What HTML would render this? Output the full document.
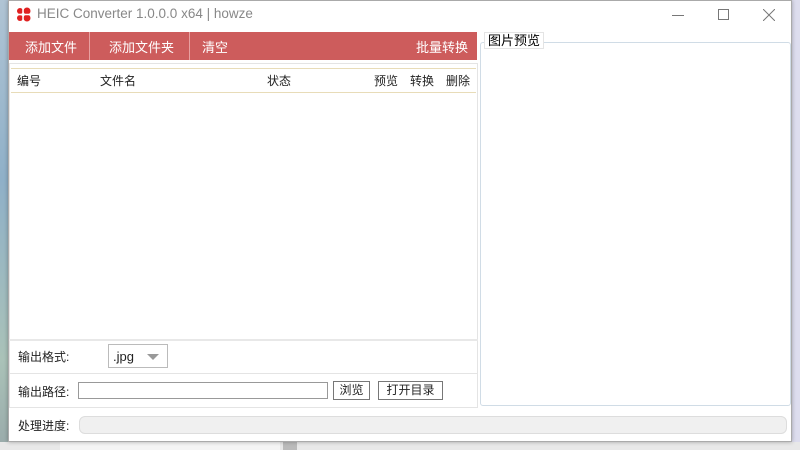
<!DOCTYPE html>
<html><head><meta charset="utf-8"><style>
*{margin:0;padding:0;box-sizing:border-box}
body{width:800px;height:450px;overflow:hidden;position:relative;background:#c9d3d6;font-family:"Liberation Sans","Noto Sans CJK SC",sans-serif;font-size:12px;color:#222}
.a{position:absolute}
</style></head><body>
<div class="a" style="left:0;top:0;width:8px;height:450px;background:linear-gradient(#b0c4d4,#8fb0c8 40%,#aac2b8 80%,#9aa 100%)"></div>
<div class="a" style="left:0;top:442px;width:800px;height:8px;background:#e8e8e8"></div>
<div class="a" style="left:60px;top:442px;width:220px;height:8px;background:#f4f4f4"></div>
<div class="a" style="left:283px;top:442px;width:14px;height:8px;background:#bbb"></div>
<div class="a" style="left:792px;top:0;width:8px;height:442px;background:#dde"></div>
<!-- window -->
<div class="a" style="left:8px;top:0;width:784px;height:442px;background:#fff;border:1px solid #aaa;box-shadow:0 0 4px rgba(0,0,0,.3)"></div>
<!-- title -->
<svg class="a" style="left:16px;top:7px" width="16" height="16" viewBox="0 0 16 16"><circle cx="4" cy="4" r="3" fill="#e02020"/><circle cx="11" cy="4" r="3.5" fill="#e02020"/><circle cx="4" cy="11" r="3" fill="#e02020"/><circle cx="11" cy="11" r="3.5" fill="#e02020"/><path d="M7 1v14M1 7.5h14" stroke="#fff" stroke-width="1.5"/></svg>
<div class="a" style="left:37px;top:6px;font-size:13.5px;color:#888">HEIC Converter 1.0.0.0 x64 | howze</div>
<div class="a" style="left:672px;top:15px;width:12px;height:1px;background:#777"></div>
<div class="a" style="left:718px;top:9px;width:11px;height:11px;border:1px solid #777"></div>
<svg class="a" style="left:763px;top:9px" width="12" height="12"><path d="M0 0L12 12M12 0L0 12" stroke="#777" stroke-width="1"/></svg>
<!-- toolbar -->
<div class="a" style="left:9px;top:32px;width:468px;height:28px;background:#cd5c5c;color:#fff;font-size:13px">
<span class="a" style="left:16px;top:5px">添加文件</span>
<span class="a" style="left:80px;top:0;width:1px;height:28px;background:#e8a0a0"></span>
<span class="a" style="left:100px;top:5px">添加文件夹</span>
<span class="a" style="left:180px;top:0;width:1px;height:28px;background:#e8a0a0"></span>
<span class="a" style="left:193px;top:5px">清空</span>
<span class="a" style="left:407px;top:5px">批量转换</span>
</div>
<div class="a" style="left:9px;top:63px;width:469px;height:345px;border:1px solid #e4e4e4"></div>
<div class="a" style="left:11px;top:68px;width:465px;height:25px;border-top:1px solid #e8dcb8;border-bottom:1px solid #e8dcb8"></div>
<div class="a" style="top:72px;left:17px">编号</div>
<div class="a" style="top:72px;left:100px">文件名</div>
<div class="a" style="top:72px;left:267px">状态</div>
<div class="a" style="top:72px;left:374px">预览</div>
<div class="a" style="top:72px;left:410px">转换</div>
<div class="a" style="top:72px;left:446px">删除</div>
<div class="a" style="left:9px;top:339px;width:469px;height:2px;background:#e8e8e8"></div>
<div class="a" style="left:9px;top:373px;width:469px;height:1px;background:#e4e4e4"></div>
<div class="a" style="left:9px;top:407px;width:469px;height:1px;background:#e4e4e4"></div>
<div class="a" style="top:348px;left:18px">输出格式:</div>
<div class="a" style="left:108px;top:344px;width:60px;height:24px;border:1px solid #bbb;background:#fff"><span class="a" style="left:4px;top:4px;font-size:13px">.jpg</span><span class="a" style="left:38px;top:9px;border-left:6px solid transparent;border-right:6px solid transparent;border-top:6px solid #999"></span></div>
<div class="a" style="top:383px;left:18px">输出路径:</div>
<div class="a" style="left:78px;top:382px;width:250px;height:17px;border:1px solid #999;background:#fff"></div>
<div class="a" style="left:333px;top:381px;width:37px;height:19px;border:1px solid #777;background:#fff;text-align:center;line-height:17px">浏览</div>
<div class="a" style="left:378px;top:381px;width:65px;height:19px;border:1px solid #777;background:#fff;text-align:center;line-height:17px">打开目录</div>
<div class="a" style="top:417px;left:18px">处理进度:</div>
<div class="a" style="left:79px;top:416px;width:708px;height:18px;border:1px solid #ddd;border-radius:6px;background:#f0f0f0"></div>
<!-- preview group -->
<div class="a" style="left:480px;top:42px;width:311px;height:364px;border:1px solid #d0dce6;border-radius:3px"></div>
<div class="a" style="left:484px;top:32px;height:17px;padding:0 3px;background:#fff;border:1px solid #e4e4e4;font-size:13px;line-height:15px;color:#000">图片预览</div>
</body></html>
